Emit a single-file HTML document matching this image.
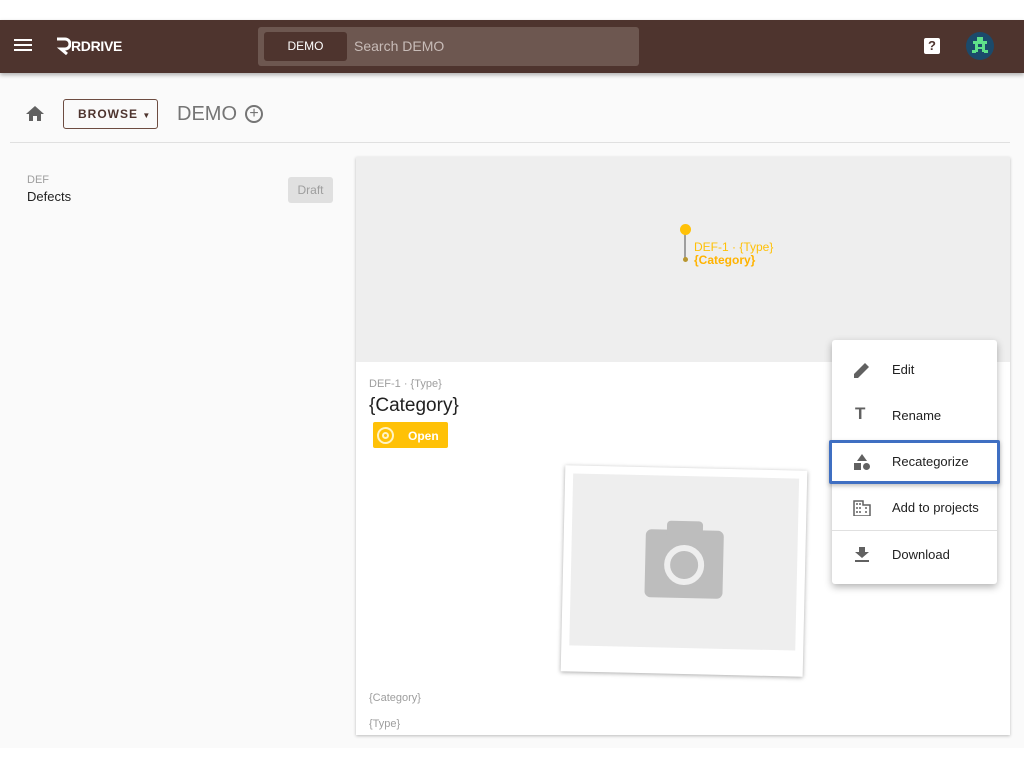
<!DOCTYPE html>
<html><head><style>
*{box-sizing:border-box;margin:0;padding:0}
body{width:1024px;height:768px;background:#fff;font-family:"Liberation Sans",sans-serif;position:relative;overflow:hidden}
.a{position:absolute}
</style></head><body>
<div class="a" style="left:0;top:73px;width:1024px;height:675px;background:#fafafa"></div>
<div class="a" style="left:0;top:20px;width:1024px;height:53px;background:#4e342e;box-shadow:0 2px 4px rgba(0,0,0,.3)"></div>
<svg class="a" style="left:14px;top:38px" width="18" height="14"><rect y="1" width="18" height="2" fill="#fff"/><rect y="6" width="18" height="2" fill="#fff"/><rect y="11" width="18" height="2" fill="#fff"/></svg>
<svg class="a" style="left:55px;top:37px" width="16" height="18"><path d="M2 2h8a5 5 0 0 1 0 10H6l6 5" stroke="#fff" stroke-width="3" fill="none"/></svg>
<div class="a" style="left:71px;top:38px;color:#fff;font-size:14px;font-weight:bold;letter-spacing:-.3px">RDRIVE</div>
<div class="a" style="left:258px;top:27px;width:381px;height:39px;background:#6d5750;border-radius:3px"></div>
<div class="a" style="left:264px;top:32px;width:83px;height:29px;background:#4e342e;border-radius:3px;color:#fff;font-size:12px;text-align:center;line-height:29px">DEMO</div>
<div class="a" style="left:354px;top:38px;color:#c8bcb8;font-size:14px">Search DEMO</div>
<div class="a" style="left:924px;top:38px;width:16px;height:16px;background:#fff;border-radius:2px;color:#4e342e;font-size:13px;font-weight:bold;text-align:center;line-height:16px">?</div>
<div class="a" style="left:966px;top:32px;width:28px;height:28px;border-radius:50%;background:#1b4a6b"></div>
<svg class="a" style="left:970px;top:36px" width="20" height="20"><g fill="#5fe08a"><rect x="7" y="1" width="6" height="4"/><rect x="3" y="5" width="14" height="3"/><rect x="5" y="8" width="3" height="8"/><rect x="12" y="8" width="3" height="8"/><rect x="8" y="11" width="4" height="2"/><rect x="2" y="14" width="4" height="3"/><rect x="14" y="14" width="4" height="3"/></g></svg>

<svg class="a" style="left:26px;top:106px" width="18" height="16"><path d="M7 15v-5h4v5h4V8h3L9 0 0 8h3v7z" fill="#616161"/></svg>
<div class="a" style="left:63px;top:99px;width:95px;height:30px;border:1px solid #6d4c41;border-radius:3px;font-size:12px;letter-spacing:1px;color:#4e342e;line-height:28px;padding-left:14px;font-weight:bold">BROWSE <span style="font-size:8px">▼</span></div>
<div class="a" style="left:177px;top:103px;font-size:20px;color:#757575">DEMO</div>
<div class="a" style="left:245px;top:105px;width:18px;height:18px;border:2px solid #757575;border-radius:50%;color:#757575;font-size:16px;line-height:13px;text-align:center">+</div>
<div class="a" style="left:10px;top:142px;width:1000px;height:1px;background:#e0e0e0"></div>

<div class="a" style="left:27px;top:174px;font-size:11px;color:#9e9e9e">DEF</div>
<div class="a" style="left:27px;top:189px;font-size:13px;color:#212121">Defects</div>
<div class="a" style="left:288px;top:177px;width:45px;height:26px;background:#e0e0e0;border-radius:3px;font-size:12px;color:#9e9e9e;text-align:center;line-height:26px">Draft</div>

<div class="a" style="left:356px;top:157px;width:654px;height:578px;background:#fff;box-shadow:0 1px 3px rgba(0,0,0,.25)"></div>
<div class="a" style="left:356px;top:157px;width:654px;height:205px;background:#eeeeee"></div>
<div class="a" style="left:684px;top:232px;width:2px;height:26px;background:#9e9e9e"></div>
<div class="a" style="left:680px;top:224px;width:11px;height:11px;border-radius:50%;background:#ffc107"></div>
<div class="a" style="left:683px;top:257px;width:5px;height:5px;border-radius:50%;background:#b8962e"></div>
<div class="a" style="left:694px;top:240px;font-size:12px;color:#ffc107">DEF-1 · {Type}</div>
<div class="a" style="left:694px;top:253px;font-size:12px;color:#ffb300;font-weight:bold">{Category}</div>

<div class="a" style="left:369px;top:378px;font-size:11px;color:#9e9e9e">DEF-1 · {Type}</div>
<div class="a" style="left:369px;top:395px;font-size:19px;color:#212121">{Category}</div>
<div class="a" style="left:373px;top:422px;width:75px;height:26px;background:#ffc107;border-radius:2px"></div>
<div class="a" style="left:377px;top:427px;width:17px;height:17px;border:2px solid #fff3c4;border-radius:50%"></div>
<div class="a" style="left:382px;top:432px;width:7px;height:7px;border:2px solid #fff3c4;border-radius:50%"></div>
<div class="a" style="left:408px;top:429px;font-size:12px;color:#fff;font-weight:bold">Open</div>

<div class="a" style="left:563px;top:468px;width:242px;height:206px;background:#fff;transform:rotate(1.3deg);box-shadow:0 1px 4px rgba(0,0,0,.35)">
 <div class="a" style="left:8px;top:8px;width:226px;height:172px;background:#eeeeee"></div>
 <div class="a" style="left:82px;top:62px;width:78px;height:68px;background:#bdbdbd;border-radius:6px"></div>
 <div class="a" style="left:103px;top:53px;width:36px;height:14px;background:#bdbdbd;border-radius:4px 4px 0 0"></div>
 <div class="a" style="left:101px;top:77px;width:40px;height:40px;border-radius:50%;border:6px solid #eee;background:#bdbdbd"></div>
</div>

<div class="a" style="left:369px;top:692px;font-size:11px;color:#9e9e9e">{Category}</div>
<div class="a" style="left:369px;top:718px;font-size:11px;color:#9e9e9e">{Type}</div>

<div class="a" style="left:832px;top:340px;width:165px;height:244px;background:#fff;border-radius:3px;box-shadow:0 3px 8px rgba(0,0,0,.3)"></div>
<div class="a" style="left:832px;top:530px;width:165px;height:1px;background:#e0e0e0"></div>
<div class="a" style="left:892px;top:362px;font-size:13px;color:#212121">Edit</div>
<div class="a" style="left:892px;top:408px;font-size:13px;color:#212121">Rename</div>
<div class="a" style="left:892px;top:454px;font-size:13px;color:#212121">Recategorize</div>
<div class="a" style="left:892px;top:500px;font-size:13px;color:#212121">Add to projects</div>
<div class="a" style="left:892px;top:547px;font-size:13px;color:#212121">Download</div>
<svg class="a" style="left:853px;top:361px" width="18" height="18"><path d="M1 17v-4L12 2l4 4L5 17z" fill="#616161"/></svg>
<div class="a" style="left:855px;top:404px;font-size:17px;color:#616161;font-weight:bold">T</div>
<svg class="a" style="left:853px;top:453px" width="18" height="18"><path d="M9 1l5 7H4z" fill="#616161"/><rect x="1" y="10" width="7" height="7" fill="#616161"/><circle cx="13.5" cy="13.5" r="3.5" fill="#616161"/></svg>
<svg class="a" style="left:853px;top:500px" width="18" height="16"><path d="M1 1h9v4h7v11H1z" fill="none" stroke="#616161" stroke-width="1.5"/><path d="M3 4h2M6 4h2M3 8h2M6 8h2M3 12h2M6 12h2M12 8h2M12 12h2" stroke="#616161" stroke-width="1.5"/></svg>
<svg class="a" style="left:854px;top:546px" width="16" height="16"><path d="M5 1h6v5h4L8 12 1 6h4z" fill="#616161"/><rect x="1" y="14" width="14" height="2" fill="#616161"/></svg>
<div class="a" style="left:829px;top:440px;width:171px;height:44px;border:3px solid #3f6fc2;border-radius:2px;box-shadow:0 2px 4px rgba(0,0,0,.25)"></div>
</body></html>
